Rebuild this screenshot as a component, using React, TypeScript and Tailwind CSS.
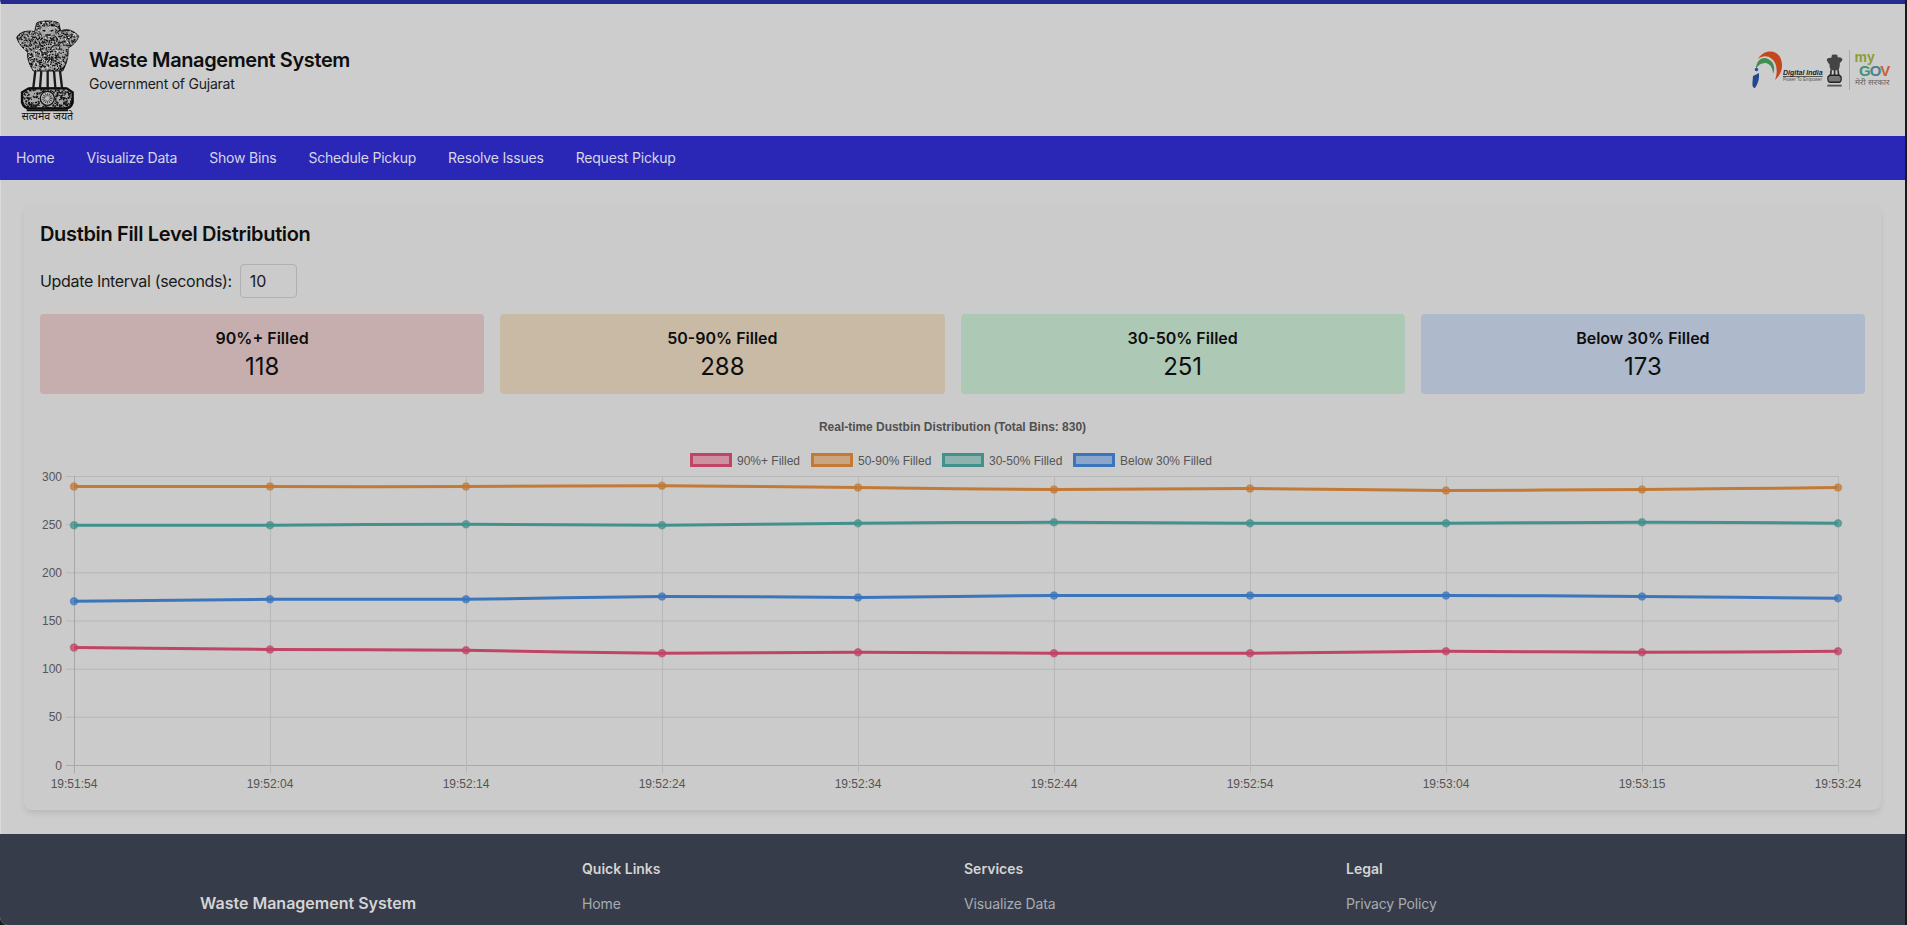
import { useMemo } from "react";

const navLinks = ["Home", "Visualize Data", "Show Bins", "Schedule Pickup", "Resolve Issues", "Request Pickup"];

const stats = [
  { label: "90%+ Filled", value: 118, bg: "bg-[#c7aeae]" },
  { label: "50-90% Filled", value: 288, bg: "bg-[#c9baa5]" },
  { label: "30-50% Filled", value: 251, bg: "bg-[#aec8b6]" },
  { label: "Below 30% Filled", value: 173, bg: "bg-[#aeb9cc]" },
];

const times = ["19:51:54", "19:52:04", "19:52:14", "19:52:24", "19:52:34", "19:52:44", "19:52:54", "19:53:04", "19:53:15", "19:53:24"];

const series = [
  { label: "90%+ Filled", color: "#bf4466", fill: "#cc92a2", legendX: 690, textX: 737, data: [122, 120, 119, 116, 117, 116, 116, 118, 117, 118] },
  { label: "50-90% Filled", color: "#c27a36", fill: "#c9a681", legendX: 811, textX: 858, data: [289, 289, 289, 290, 288, 286, 287, 285, 286, 288] },
  { label: "30-50% Filled", color: "#43918c", fill: "#90b2ae", legendX: 942, textX: 989, data: [249, 249, 250, 249, 251, 252, 251, 251, 252, 251] },
  { label: "Below 30% Filled", color: "#3b76bc", fill: "#8ba6ca", legendX: 1073, textX: 1120, data: [170, 172, 172, 175, 174, 176, 176, 176, 175, 173] },
];

const LEFT = 74;
const RIGHT = 1838;
const TOP = 476;
const BOTTOM = 765;
const xAt = (i: number) => LEFT + ((RIGHT - LEFT) / 9) * i;
const yAt = (v: number) => BOTTOM - ((BOTTOM - TOP) / 300) * v;

function linePath(data: number[]) {
  const pts = data.map((v, i) => [xAt(i), yAt(v)]);
  const t = 0.1;
  let d = `M${pts[0][0]} ${pts[0][1]}`;
  for (let i = 1; i < pts.length; i++) {
    const p0 = pts[Math.max(i - 2, 0)];
    const p1 = pts[i - 1];
    const p2 = pts[i];
    const p3 = pts[Math.min(i + 1, pts.length - 1)];
    d += ` C${p1[0] + (p2[0] - p0[0]) * t} ${p1[1] + (p2[1] - p0[1]) * t} ${p2[0] - (p3[0] - p1[0]) * t} ${p2[1] - (p3[1] - p1[1]) * t} ${p2[0]} ${p2[1]}`;
  }
  return d;
}

function FillChart() {
  return (
    <svg viewBox="40 410 1825 384" className="mt-4 block h-[384px] w-full font-['Liberation_Sans',sans-serif]">
      <text x="952.5" y="431" textAnchor="middle" fontSize="12" fontWeight="700" fill="#505050" letterSpacing="-0.03">
        Real-time Dustbin Distribution (Total Bins: 830)
      </text>
      {series.map((s) => (
        <g key={s.label}>
          <rect x={s.legendX + 1.5} y="454.5" width="39" height="11" fill={s.fill} stroke={s.color} strokeWidth="3" />
          <text x={s.textX} y="464.5" fontSize="12" fill="#555">
            {s.label}
          </text>
        </g>
      ))}
      {[0, 50, 100, 150, 200, 250, 300].map((v) => (
        <g key={v}>
          <line x1="66" x2={RIGHT} y1={yAt(v) + 0.5} y2={yAt(v) + 0.5} stroke={v === 0 ? "#a8a8a8" : "#b7b7b7"} />
          <text x="62" y={yAt(v) + 4.5} textAnchor="end" fontSize="12" fill="#555">
            {v}
          </text>
        </g>
      ))}
      {times.map((t, i) => (
        <g key={t}>
          <line x1={xAt(i) + 0.5} x2={xAt(i) + 0.5} y1={TOP} y2="773" stroke={i === 0 ? "#a8a8a8" : "#b7b7b7"} />
          <text x={xAt(i)} y="788" textAnchor="middle" fontSize="12" fill="#555">
            {t}
          </text>
        </g>
      ))}
      {series.map((s) => (
        <g key={s.label}>
          <path d={linePath(s.data)} fill="none" stroke={s.color} strokeWidth="3" />
          {s.data.map((v, i) => (
            <circle key={i} cx={xAt(i)} cy={yAt(v)} r="3.5" fill={s.color} fillOpacity="0.75" stroke={s.color} strokeOpacity="0.6" strokeWidth="1.5" />
          ))}
        </g>
      ))}
    </svg>
  );
}

// speckled stone texture for the emblem
function useSpeckle(count: number) {
  return useMemo(() => {
    const out: [number, number, number][] = [];
    for (let i = 0; i < count; i++) {
      const a = Math.sin(i * 12.9898) * 43758.5453;
      const b = Math.sin(i * 78.233) * 12543.1234;
      out.push([(a - Math.floor(a)) * 225, (b - Math.floor(b)) * 290, 2 + ((i * 7) % 3)]);
    }
    return out;
  }, [count]);
}

const lionsShape =
  "M20 74 C26 60 46 50 74 56 L80 30 C92 22 134 22 146 30 L152 54 C172 44 194 54 206 70 C200 88 188 96 174 106 C176 130 170 152 158 174 L70 174 C56 152 50 130 54 118 C40 108 26 92 20 74Z";

function Emblem({ className }: { className?: string }) {
  const specks = useSpeckle(4200);
  return (
    <svg viewBox="0 0 225 345" className={className}>
      <defs>
        <clipPath id="lions">
          <path d={lionsShape} />
        </clipPath>
        <clipPath id="base">
          <path d="M56 226 L170 226 L188 238 L188 268 C184 282 174 286 166 286 L60 286 C50 286 40 282 36 268 L36 238Z" />
        </clipPath>
      </defs>
      <path d={lionsShape} fill="#a4a4a4" stroke="#1a1a1a" strokeWidth="3" />
      <g clipPath="url(#lions)">
        {specks.map(([x, y, s], i) =>
          y < 176 ? <rect key={i} x={x} y={y} width={s} height={s} fill={i % 5 === 0 ? "#e4e4e4" : "#0a0a0a"} /> : null,
        )}
      </g>
      <path d="M92 44 C104 38 124 38 136 44 L136 62 C128 72 100 72 92 62Z" fill="#b8b8b8" fillOpacity="0.8" />
      <path d="M98 52 L106 54 M122 54 L130 52 M106 66 L122 66" stroke="#111" strokeWidth="4" fill="none" />
      <path d="M76 174 C74 190 72 206 70 224 M94 174 L90 224 M113 174 L113 224 M132 174 L136 224 M150 174 C152 190 154 206 156 224" stroke="#1a1a1a" strokeWidth="7" fill="none" />
      <path d="M60 226 L166 226" stroke="#111" strokeWidth="5" />
      <path d="M56 226 L170 226 L188 238 L188 268 C184 282 174 286 166 286 L60 286 C50 286 40 282 36 268 L36 238Z" fill="#a8a8a8" stroke="#0c0c0c" strokeWidth="7" />
      <g clipPath="url(#base)">
        {specks.map(([x, y, s], i) =>
          y > 226 && i % 2 === 0 ? <rect key={i} x={x} y={y} width={s + 1} height={s + 1} fill="#111" /> : null,
        )}
      </g>
      <circle cx="112" cy="256" r="21" fill="#bcbcbc" stroke="#111" strokeWidth="4" />
      <circle cx="112" cy="256" r="11" fill="none" stroke="#444" strokeWidth="9" strokeDasharray="2.5 2.5" />
      <path d="M50 292 L174 292" stroke="#111" strokeWidth="6" />
      <text x="112" y="322" textAnchor="middle" fontSize="32" fill="#111" fontFamily="'Noto Sans','Noto Sans CJK SC',sans-serif">
        सत्यमेव जयते
      </text>
    </svg>
  );
}

function PartnerLogos() {
  return (
    <svg viewBox="1745 45 150 50" className="h-[50px] w-[150px] font-['Liberation_Sans',sans-serif]">
      <g transform="translate(1745 45)">
        <path d="M13 14 C18 5 30 4 35 12 C39 20 37 29 30 35 C33 27 32 18 27 14 C22 10 17 11 13 14Z" fill="#c4471f" />
        <path d="M11 24 C11 16 17 11 23 14 C28 16 31 22 28 29 C28 23 25 18 20 18 C16 18 13 20 11 24Z" fill="#3f8f4f" />
        <path d="M8 31 L14 28 C14.5 34 13 39 10 43 C8 43 7 41 7.5 37Z" fill="#24478f" />
        <circle cx="11.5" cy="24.5" r="1.7" fill="#2a4a9a" />
      </g>
      <text x="1783" y="75" fontSize="7" fontWeight="700" fontStyle="italic" fill="#222" textDecoration="underline">
        Digital India
      </text>
      <text x="1783" y="80.5" fontSize="4.5" fill="#555">
        Power To Empower
      </text>
      <g transform="translate(1825 52) scale(0.085 0.105)">
        <path d={lionsShape} fill="#444" />
        <path d="M72 172 L66 222 M113 172 L113 222 M154 172 L160 222" stroke="#333" strokeWidth="20" />
        <path d="M56 222 L170 222 L190 236 L190 268 C186 284 176 288 168 288 L58 288 C48 288 38 284 34 268 L34 236Z" fill="#777" stroke="#222" strokeWidth="14" />
        <path d="M28 320 L196 320" stroke="#555" strokeWidth="18" />
      </g>
      <line x1="1849.5" x2="1849.5" y1="50" y2="90" stroke="#aaa" />
      <text x="1854.5" y="62" fontSize="14" fontWeight="700" fill="#8c9e2e">
        my
      </text>
      <text x="1859" y="76" fontSize="15" fontWeight="700" letterSpacing="-1" fill="#3d9478">
        G<tspan fill="#4d7f96">O</tspan>
        <tspan fill="#c5622e">V</tspan>
      </text>
      <text x="1855" y="85" fontSize="8.5" fill="#666" fontFamily="'Noto Sans',sans-serif">
        मेरी सरकार
      </text>
    </svg>
  );
}

export default function App() {
  return (
    <div className="h-[925px] w-[1907px] overflow-hidden bg-[#1a1a1a] font-['Inter',sans-serif]">
      <div className="flex h-[925px] w-[1905px] flex-col overflow-hidden rounded-bl-lg bg-[#cdcdcd]">
        <header className="flex h-[136px] items-center border-t-4 border-l border-t-[#262a8c] border-l-[#dadada] pl-[15px] pr-[10px]">
          <Emblem className="ml-[-6px] h-[115px] w-[75px]" />
          <div className="ml-1 mt-[-1px]">
            <h1 className="text-xl leading-7 font-semibold tracking-[-0.02em] text-[#0e0e0e]">Waste Management System</h1>
            <p className="text-sm leading-5 tracking-[-0.017em] text-[#1c1c1c]">Government of Gujarat</p>
          </div>
          <div className="ml-auto">
            <PartnerLogos />
          </div>
        </header>
        <nav className="flex h-11 items-center bg-[#2b27b6]">
          {navLinks.map((link) => (
            <a key={link} className="px-4 text-sm tracking-[-0.014em] text-[#d6d6e6]">
              {link}
            </a>
          ))}
        </nav>
        <main className="flex-1 border-l border-[#dadada] p-6 pl-[23px]">
          <section className="h-[606px] rounded-lg bg-[#cbcbcb] p-4 shadow-[0_4px_6px_-1px_rgba(0,0,0,0.1)]">
            <h2 className="mb-4 text-xl leading-7 font-semibold tracking-[-0.017em] text-[#0e0e0e]">Dustbin Fill Level Distribution</h2>
            <div className="mb-4 flex items-center gap-2">
              <label className="text-base tracking-[-0.021em] text-[#1a1a1a]">Update Interval (seconds):</label>
              <input
                readOnly
                value="10"
                className="h-[34px] w-[57px] rounded border border-[#b0b0b0] px-[9px] text-base text-[#1a1a1a]"
              />
            </div>
            <div className="grid grid-cols-4 gap-4">
              {stats.map((s) => (
                <div key={s.label} className={`${s.bg} rounded px-3 pt-3 pb-[11px] text-center text-[#0e0e0e]`}>
                  <div className="text-base font-semibold">{s.label}</div>
                  <div className="mt-px text-2xl">{s.value}</div>
                </div>
              ))}
            </div>
            <FillChart />
          </section>
        </main>
        <footer className="h-[91px] bg-[#363c49] pt-[25px]">
          <div className="ml-[200px] grid grid-cols-[repeat(4,350px)] gap-8">
            <div className="pt-[32px] text-base font-semibold text-[#d4d4d4]">Waste Management System</div>
            {[
              ["Quick Links", "Home"],
              ["Services", "Visualize Data"],
              ["Legal", "Privacy Policy"],
            ].map(([head, item]) => (
              <div key={head}>
                <div className="mb-[15px] text-sm font-semibold text-[#d4d4d4]">{head}</div>
                <div className="text-sm tracking-[-0.01em] text-[#a8abb2]">{item}</div>
              </div>
            ))}
          </div>
        </footer>
      </div>
    </div>
  );
}
